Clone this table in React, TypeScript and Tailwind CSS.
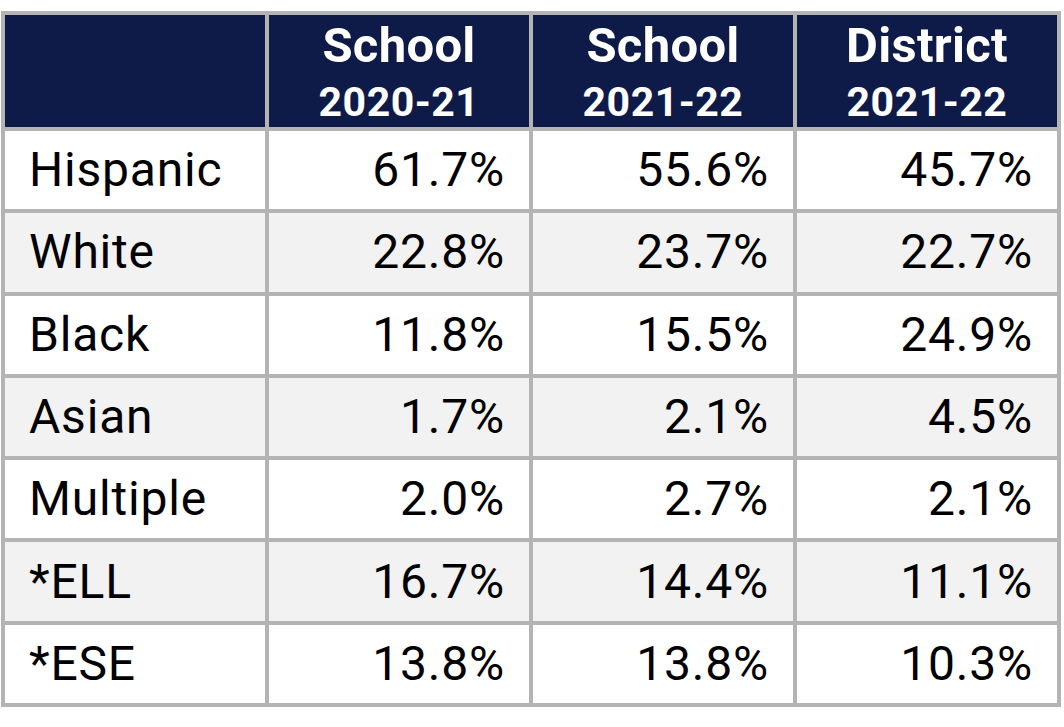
import React from "react";

const rows: [string, string, string, string][] = [
  ["Hispanic", "61.7%", "55.6%", "45.7%"],
  ["White", "22.8%", "23.7%", "22.7%"],
  ["Black", "11.8%", "15.5%", "24.9%"],
  ["Asian", "1.7%", "2.1%", "4.5%"],
  ["Multiple", "2.0%", "2.7%", "2.1%"],
  ["*ELL", "16.7%", "14.4%", "11.1%"],
  ["*ESE", "13.8%", "13.8%", "10.3%"],
];

const headers: [string, string][] = [
  ["School", "2020-21"],
  ["School", "2021-22"],
  ["District", "2021-22"],
];

export default function App() {
  return (
    <div className="w-[1064px] h-[727px] bg-white pt-[11px] pl-[1px]" style={{ fontFamily: "Roboto, 'Liberation Sans', sans-serif" }}>
      <div className="inline-grid grid-cols-[260px_260px_260px_260px] grid-rows-[112px_repeat(7,78.3px)] gap-[4px] p-[4px] bg-[#b4b4b4]">
        <div className="bg-[#0e1b48]" />
        {headers.map(([a, b], i) => (
          <div key={i} className="bg-[#0e1b48] text-white font-bold flex flex-col items-center">
            <div className="text-[49px] leading-[49px] mt-[6px] tracking-[0.3px]">{a}</div>
            <div className="text-[41px] leading-[41px] mt-[12px] tracking-[0.5px]">{b}</div>
          </div>
        ))}
        {rows.map((r, ri) => {
          const bg = ri % 2 === 0 ? "bg-white" : "bg-[#f2f2f2]";
          return (
            <React.Fragment key={ri}>
              <div className={`${bg} flex items-center pl-[24px] text-[48px] tracking-[0.8px] text-black`}>{r[0]}</div>
              {r.slice(1).map((v, ci) => (
                <div key={ci} className={`${bg} flex items-center justify-end pr-[24px] text-[48px] tracking-[0.8px] text-black`}>
                  {v}
                </div>
              ))}
            </React.Fragment>
          );
        })}
      </div>
    </div>
  );
}
